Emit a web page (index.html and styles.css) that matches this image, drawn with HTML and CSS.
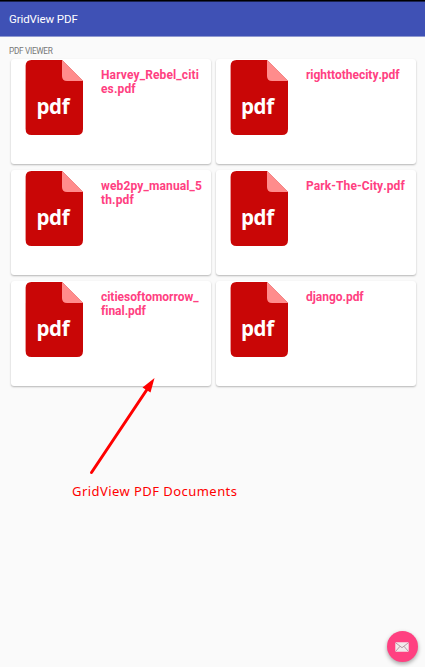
FILE: index.html
```
<!DOCTYPE html>
<html lang="en">
<head>
<meta charset="utf-8">
<title>GridView PDF</title>
<link rel="stylesheet" href="styles.css">
</head>
<body>
<svg class="defs" width="0" height="0" aria-hidden="true">
  <symbol id="pdf" viewBox="0 0 58 75">
    <path fill="#c90606" d="M6.500 0H37L58 21V69Q58 75 52 75H6.500Q.6 75 .6 69V6Q.6 0 6.500 0Z"/>
    <path fill="#ff8c8c" d="M37 0L58 21H42Q37 21 37 16Z"/>
  </symbol>
</svg>
<header class="toolbar"><h1>GridView PDF</h1></header>
<main>
  <h2 class="section">PDF VIEWER</h2>
  <div class="grid">
    <article class="card"><div class="icon"><svg><use href="#pdf"/></svg><span>pdf</span></div><p class="name loose">Harvey_Rebel_citi<br>es.pdf</p></article>
    <article class="card"><div class="icon"><svg><use href="#pdf"/></svg><span>pdf</span></div><p class="name tight">righttothecity.pdf</p></article>
    <article class="card"><div class="icon"><svg><use href="#pdf"/></svg><span>pdf</span></div><p class="name loose">web2py_manual_5<br>th.pdf</p></article>
    <article class="card"><div class="icon"><svg><use href="#pdf"/></svg><span>pdf</span></div><p class="name">Park-The-City.pdf</p></article>
    <article class="card"><div class="icon"><svg><use href="#pdf"/></svg><span>pdf</span></div><p class="name tight">citiesoftomorrow_<br>final.pdf</p></article>
    <article class="card"><div class="icon"><svg><use href="#pdf"/></svg><span>pdf</span></div><p class="name tight">django.pdf</p></article>
  </div>
</main>
<svg class="note" width="190" height="130" viewBox="60 375 190 130">
  <path d="M91.500 472.500L148 388" stroke="#f00" stroke-width="3" stroke-linecap="round"/>
  <path d="M154.500 378L142.500 387.500L150.500 392.500Z" fill="#f00"/>
  <text x="72" y="496" textLength="165">GridView PDF Documents</text>
</svg>
<button class="fab" aria-label="Compose">
  <svg width="14" height="10" viewBox="0 0 14 10">
    <rect x=".3" y=".2" width="13.400" height="9.600" rx=".8" fill="#f2e9ec"/>
    <path d="M.5 .7L7 5.700L13.500 .7M.7 9.300L5 4.300M13.300 9.300L9 4.300" fill="none" stroke="#a98491" stroke-width=".8"/>
  </svg>
</button>
</body>
</html>
```
FILE: styles.css
```
* { box-sizing: border-box; }
body {
  margin: 0;
  height: 667px;
  overflow: hidden;
  background: #fafafa;
  font-family: Roboto, "Liberation Sans", sans-serif;
}
.defs { position: absolute; }
.toolbar {
  height: 37px;
  padding: 0 9px;
  display: flex;
  align-items: center;
  background: #3f51b5;
  border-top: 1px solid #000;
  box-shadow: inset 0 1px #1b2350, inset 0 -1px #8f99d0;
}
.toolbar h1 {
  margin: 0;
  color: #fff;
  font-size: 11.500px;
  font-weight: 400;
  letter-spacing: -0.100px;
}
.section {
  margin: 0;
  padding: 10px 9px 0;
  height: 22px;
  font-size: 8.300px;
  line-height: 9px;
  font-weight: 400;
  letter-spacing: -0.330px;
  color: #777;
}
.grid {
  display: grid;
  grid-template-columns: 200px 200px;
  grid-auto-rows: 105px;
  gap: 6px 5px;
  padding-left: 11px;
}
.card {
  display: flex;
  align-items: flex-start;
  background: #fff;
  border-radius: 3px;
  box-shadow: 0 1px 2px rgba(0, 0, 0, .28);
}
.icon {
  display: grid;
  width: 58px;
  height: 75px;
  margin: 1px 18px 0 14px;
  flex: none;
}
.card:nth-child(even) .icon { margin: 1px 18.500px 0 13.500px; }
.icon > * { grid-area: 1 / 1; }
.icon svg {
  width: 58px;
  height: 75px;
}
.icon span {
  padding: 31px 0 0 11.500px;
  color: #fff;
  font: 700 20.500px/30px "Open Sans", sans-serif;
  letter-spacing: -0.400px;
}
.name {
  margin: 9px 0 0;
  white-space: nowrap;
  color: #ff4081;
  font-size: 12px;
  line-height: 14px;
  font-weight: 700;
  font-kerning: none;
  letter-spacing: 0.080px;
}
.name.loose { letter-spacing: 0.130px; }
.name.tight { letter-spacing: -0.030px; }
.note {
  position: absolute;
  left: 60px;
  top: 375px;
}
.note text {
  fill: #f00;
  font: 400 13px "Noto Sans", sans-serif;
}
.fab {
  position: absolute;
  left: 387px;
  top: 631px;
  width: 31px;
  height: 31px;
  padding: 0 1px 0 0;
  border: 0;
  border-radius: 50%;
  background: #ff4081;
  box-shadow: 0 2px 4px rgba(0, 0, 0, .35);
  display: flex;
  align-items: center;
  justify-content: center;
}
```
